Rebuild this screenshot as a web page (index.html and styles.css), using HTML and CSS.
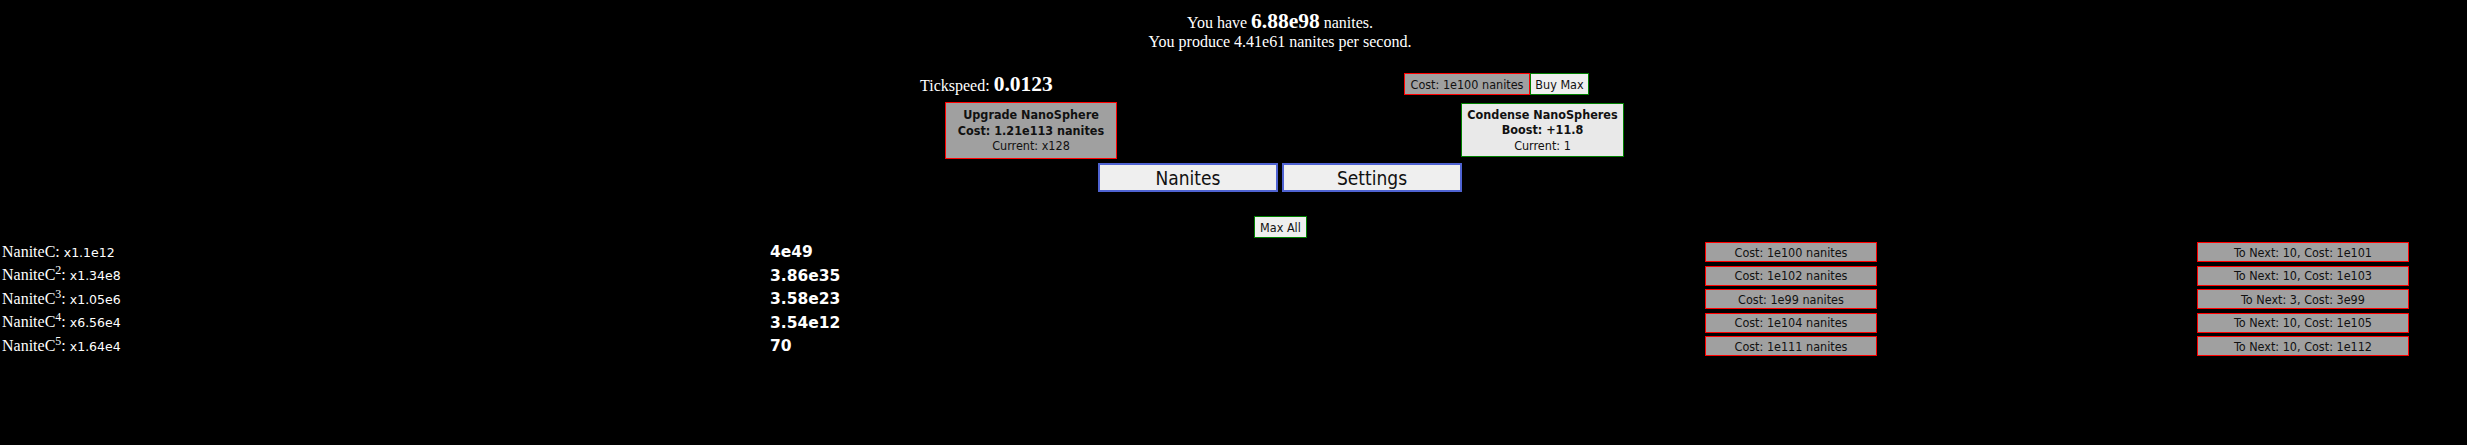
FILE: index.html
```html
<!DOCTYPE html>
<html>
<head>
<meta charset="utf-8">
<title>Nanites</title>
<link rel="stylesheet" href="styles.css">
</head>
<body>
<div class="page">
  <div class="top">
    <div class="amount">You have <span class="big">6.88e98</span> nanites.</div>
    <div class="produce">You produce 4.41e61 nanites per second.</div>
  </div>
  <div class="controls">
    <div class="col col-left">
      <div class="tick">Tickspeed: <span class="big">0.0123</span></div>
      <button class="box upgrade"><b>Upgrade NanoSphere</b><b>Cost: 1.21e113 nanites</b><span>Current: x128</span></button>
    </div>
    <div class="col col-right">
      <div class="buyrow"><button class="btn cost-top">Cost: 1e100 nanites</button><button class="btn buymax">Buy Max</button></div>
      <button class="box condense"><b>Condense NanoSpheres</b><b>Boost: +11.8</b><span>Current: 1</span></button>
    </div>
  </div>
  <div class="tabs">
    <button class="tab">Nanites</button>
    <button class="tab">Settings</button>
  </div>
  <div class="maxrow"><button class="btn maxall">Max All</button></div>
</div>
<div class="rows">
  <div class="row">
    <div class="name">NaniteC: <span class="mult">x1.1e12</span></div>
    <div class="amt">4e49</div>
    <div><button class="btn gray cost">Cost: 1e100 nanites</button></div>
    <div><button class="btn gray next">To Next: 10, Cost: 1e101</button></div>
  </div>
  <div class="row">
    <div class="name">NaniteC<sup>2</sup>: <span class="mult">x1.34e8</span></div>
    <div class="amt">3.86e35</div>
    <div><button class="btn gray cost">Cost: 1e102 nanites</button></div>
    <div><button class="btn gray next">To Next: 10, Cost: 1e103</button></div>
  </div>
  <div class="row">
    <div class="name">NaniteC<sup>3</sup>: <span class="mult">x1.05e6</span></div>
    <div class="amt">3.58e23</div>
    <div><button class="btn gray cost">Cost: 1e99 nanites</button></div>
    <div><button class="btn gray next">To Next: 3, Cost: 3e99</button></div>
  </div>
  <div class="row">
    <div class="name">NaniteC<sup>4</sup>: <span class="mult">x6.56e4</span></div>
    <div class="amt">3.54e12</div>
    <div><button class="btn gray cost">Cost: 1e104 nanites</button></div>
    <div><button class="btn gray next">To Next: 10, Cost: 1e105</button></div>
  </div>
  <div class="row">
    <div class="name">NaniteC<sup>5</sup>: <span class="mult">x1.64e4</span></div>
    <div class="amt">70</div>
    <div><button class="btn gray cost">Cost: 1e111 nanites</button></div>
    <div><button class="btn gray next">To Next: 10, Cost: 1e112</button></div>
  </div>
</div>
</body>
</html>
```
FILE: styles.css
```css
html, body {
  margin: 0;
  background: #000;
  color: #fff;
  font-family: "Liberation Serif", "Times New Roman", serif;
  font-size: 16px;
}

.page {
  padding-left: 93px;
  text-align: center;
}

.top {
  padding-top: 11px;
}

.amount {
  line-height: 21px;
  height: 21px;
}

.produce {
  line-height: 20px;
}

.big {
  font-weight: bold;
  font-size: 21.5px;
}

.controls {
  width: 720px;
  margin: 21px auto 0;
  display: grid;
  grid-template-columns: 360px 360px;
  text-align: left;
}

.col {
  display: flex;
  flex-direction: column;
  align-items: flex-start;
}

.tick {
  height: 22px;
  line-height: 22px;
}

button {
  font-family: "DejaVu Sans Condensed", "DejaVu Sans", sans-serif;
  font-size: 12.5px;
  color: #111;
  margin: 0;
  cursor: pointer;
}

.btn {
  height: 22px;
  padding: 0 4px;
  border: 1px solid #008000;
  background: #efefef;
}

.box {
  display: flex;
  flex-direction: column;
  align-items: center;
  justify-content: center;
  line-height: 15.5px;
  padding: 0;
}

.upgrade {
  margin: 7px 0 0 25px;
  width: 172px;
  height: 57px;
  background: #a0a0a0;
  border: 1px solid #ff0000;
}

.condense {
  margin: 8px 0 0 181px;
  width: 163px;
  height: 54px;
  background: #e9e9e9;
  border: 1px solid #008000;
}

.buyrow {
  display: flex;
  padding-left: 124px;
}

.cost-top {
  width: 126px;
  background: #a0a0a0;
  border-color: #ff0000;
}

.buymax {
  width: 59px;
}

.tabs {
  display: flex;
  justify-content: center;
  gap: 4px;
  margin-top: 4px;
}

.tab {
  width: 180px;
  height: 29px;
  border: 2px solid #4f63d2;
  background: #efefef;
  font-size: 19px;
  padding: 0;
}

.maxrow {
  margin-top: 24px;
  display: flex;
  justify-content: center;
  padding-left: 1px;
}

.maxall {
  width: 53px;
  padding: 0;
}

.rows {
  padding-top: 2.5px;
  padding-left: 2px;
}

.row {
  display: grid;
  grid-template-columns: 768px 935px 492px 1fr;
  height: 23.5px;
  align-items: center;
}

.name {
  font-size: 16px;
  line-height: 20px;
}

.name sup {
  font-size: 12px;
  line-height: 0;
}

.mult {
  font-family: "DejaVu Sans", sans-serif;
  font-size: 12.5px;
}

.amt {
  font-family: "DejaVu Sans", sans-serif;
  font-weight: bold;
  font-size: 15.5px;
}

.row .btn {
  display: block;
  height: 20px;
  padding: 0;
}

.gray {
  background: #a0a0a0;
  border: 1px solid #ff0000;
}

.cost {
  width: 172px;
}

.next {
  width: 212px;
}
```
